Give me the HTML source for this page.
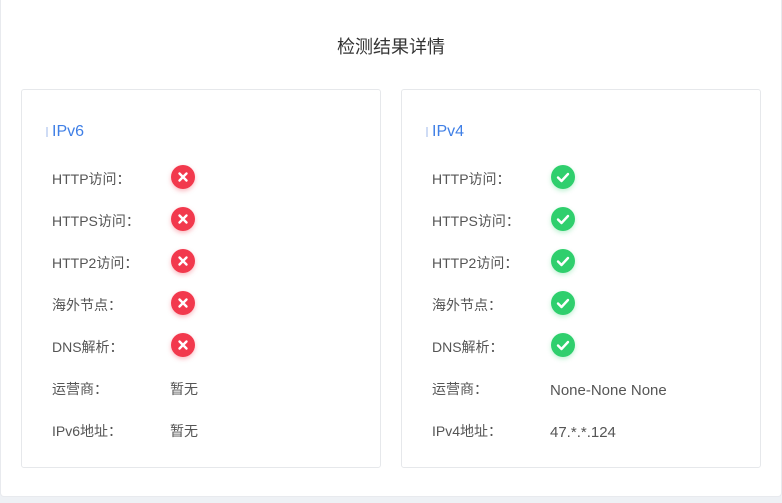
<!DOCTYPE html>
<html><head><meta charset="utf-8"><style>
body{margin:0;width:782px;height:503px;background:#eef1f5;font-family:"Liberation Sans","Noto Sans CJK SC",sans-serif;position:relative;overflow:hidden}
.outer{position:absolute;left:0;top:0;width:780px;height:496px;background:#fff;border:1px solid #e8eaee;border-top:none;border-radius:0 0 4px 4px}
.title{position:absolute;top:33px;left:0;width:782px;text-align:center;font-size:18px;color:#333}
.panel{position:absolute;top:89px;width:358px;height:377px;border:1px solid #e6e8eb;border-radius:3px;background:#fff}
.h{position:absolute;left:30px;top:33px;font-size:16px;color:#3f7fe6}
.bar{position:absolute;left:24px;top:37px;width:2px;height:10px;background:#cfdcf5}
.lab{position:absolute;left:30px;font-size:14px;color:#555}
.val{position:absolute;left:148px;font-size:14px;color:#555}
.ic{position:absolute;left:148px;width:24px;height:24px;border-radius:50%}
.r{background:#f2394d;box-shadow:0 2px 5px rgba(242,57,77,.35)}
.g{background:#2fcf6d;box-shadow:0 2px 5px rgba(47,207,109,.3)}
.ic svg{position:absolute;left:0;top:0}
</style></head><body>
<div class="outer"></div>
<div class="title">检测结果详情</div>

<div class="panel" style="left:21px">
<div class="bar"></div><div class="h">IPv6</div>
<div class="lab" style="top:79px">HTTP访问：</div><div class="ic r" style="left:149px;top:75px"><svg width="24" height="24"><path d="M8.5 8.5L15.5 15.5M15.5 8.5L8.5 15.5" stroke="#fff" stroke-width="2.4" stroke-linecap="round"/></svg></div>
<div class="lab" style="top:121px">HTTPS访问：</div><div class="ic r" style="left:149px;top:117px"><svg width="24" height="24"><path d="M8.5 8.5L15.5 15.5M15.5 8.5L8.5 15.5" stroke="#fff" stroke-width="2.4" stroke-linecap="round"/></svg></div>
<div class="lab" style="top:163px">HTTP2访问：</div><div class="ic r" style="left:149px;top:159px"><svg width="24" height="24"><path d="M8.5 8.5L15.5 15.5M15.5 8.5L8.5 15.5" stroke="#fff" stroke-width="2.4" stroke-linecap="round"/></svg></div>
<div class="lab" style="top:205px">海外节点：</div><div class="ic r" style="left:149px;top:201px"><svg width="24" height="24"><path d="M8.5 8.5L15.5 15.5M15.5 8.5L8.5 15.5" stroke="#fff" stroke-width="2.4" stroke-linecap="round"/></svg></div>
<div class="lab" style="top:247px">DNS解析：</div><div class="ic r" style="left:149px;top:243px"><svg width="24" height="24"><path d="M8.5 8.5L15.5 15.5M15.5 8.5L8.5 15.5" stroke="#fff" stroke-width="2.4" stroke-linecap="round"/></svg></div>
<div class="lab" style="top:289px">运营商：</div><div class="val" style="top:289px">暂无</div>
<div class="lab" style="top:331px">IPv6地址：</div><div class="val" style="top:331px">暂无</div>
</div>

<div class="panel" style="left:401px">
<div class="bar"></div><div class="h">IPv4</div>
<div class="lab" style="top:79px">HTTP访问：</div><div class="ic g" style="left:149px;top:75px"><svg width="24" height="24"><path d="M7 12.5L10.5 16L17 9" fill="none" stroke="#fff" stroke-width="2.4" stroke-linecap="round" stroke-linejoin="round"/></svg></div>
<div class="lab" style="top:121px">HTTPS访问：</div><div class="ic g" style="left:149px;top:117px"><svg width="24" height="24"><path d="M7 12.5L10.5 16L17 9" fill="none" stroke="#fff" stroke-width="2.4" stroke-linecap="round" stroke-linejoin="round"/></svg></div>
<div class="lab" style="top:163px">HTTP2访问：</div><div class="ic g" style="left:149px;top:159px"><svg width="24" height="24"><path d="M7 12.5L10.5 16L17 9" fill="none" stroke="#fff" stroke-width="2.4" stroke-linecap="round" stroke-linejoin="round"/></svg></div>
<div class="lab" style="top:205px">海外节点：</div><div class="ic g" style="left:149px;top:201px"><svg width="24" height="24"><path d="M7 12.5L10.5 16L17 9" fill="none" stroke="#fff" stroke-width="2.4" stroke-linecap="round" stroke-linejoin="round"/></svg></div>
<div class="lab" style="top:247px">DNS解析：</div><div class="ic g" style="left:149px;top:243px"><svg width="24" height="24"><path d="M7 12.5L10.5 16L17 9" fill="none" stroke="#fff" stroke-width="2.4" stroke-linecap="round" stroke-linejoin="round"/></svg></div>
<div class="lab" style="top:289px">运营商：</div><div class="val" style="top:292px;font-size:15px">None-None None</div>
<div class="lab" style="top:331px">IPv4地址：</div><div class="val" style="top:334px;font-size:15px">47.*.*.124</div>
</div>
</body></html>
